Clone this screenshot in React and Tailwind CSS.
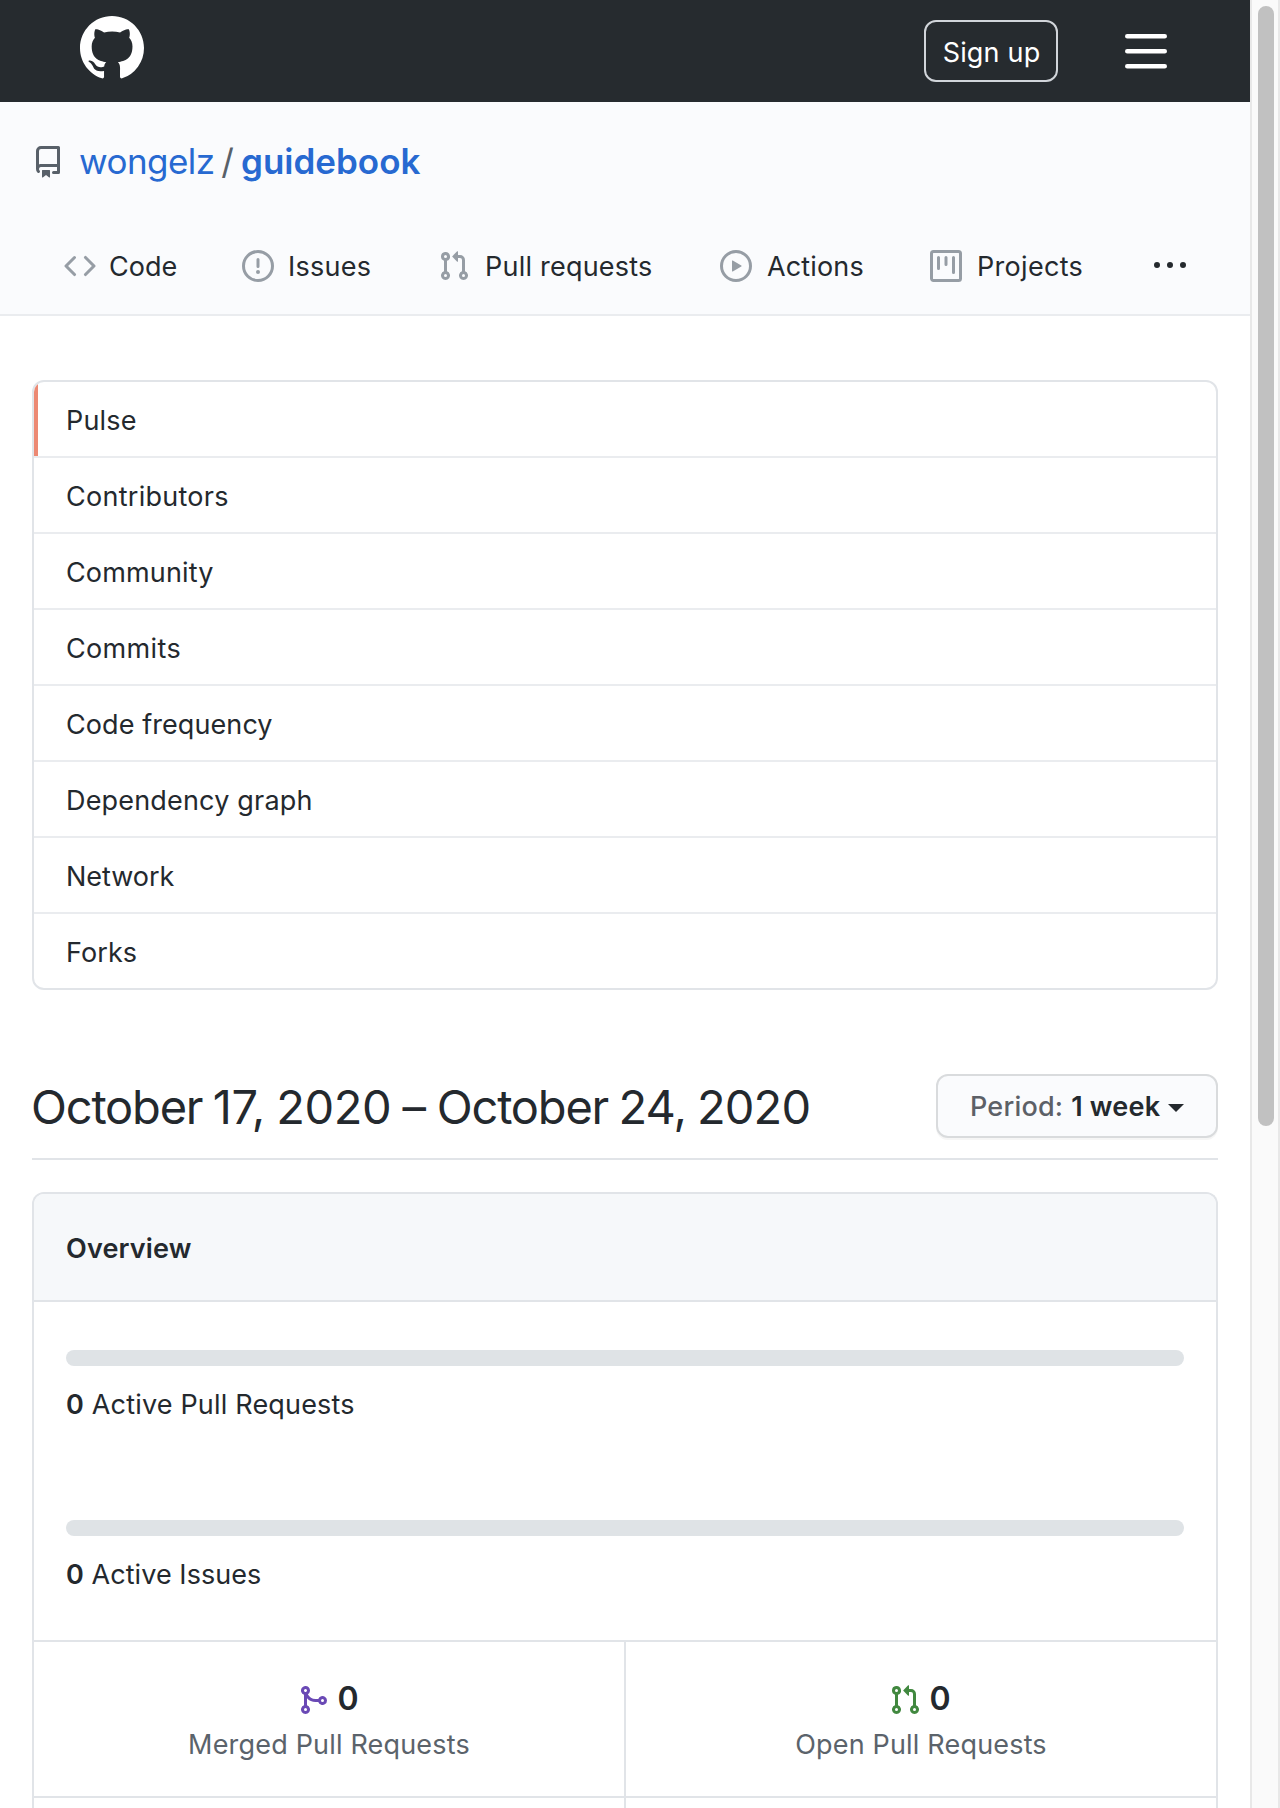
import React from 'react';

const paths = {
  github:
    'M8 0C3.58 0 0 3.58 0 8c0 3.54 2.29 6.53 5.47 7.59.4.07.55-.17.55-.38 0-.19-.01-.82-.01-1.49-2.01.37-2.53-.49-2.69-.94-.09-.23-.48-.94-.82-1.13-.28-.15-.68-.52-.01-.53.63-.01 1.08.58 1.23.82.72 1.21 1.87.87 2.33.66.07-.52.28-.87.51-1.07-1.78-.2-3.64-.89-3.64-3.95 0-.87.31-1.59.82-2.15-.08-.2-.36-1.02.08-2.12 0 0 .67-.21 2.2.82.64-.18 1.32-.27 2-.27.68 0 1.36.09 2 .27 1.53-1.04 2.2-.82 2.2-.82.44 1.1.16 1.92.08 2.12.51.56.82 1.27.82 2.15 0 3.07-1.87 3.75-3.65 3.95.29.25.54.73.54 1.48 0 1.07-.01 1.93-.01 2.2 0 .21.15.46.55.38A8.013 8.013 0 0016 8c0-4.42-3.58-8-8-8z',
  bars:
    'M1 2.75A.75.75 0 011.75 2h12.5a.75.75 0 110 1.5H1.75A.75.75 0 011 2.75zm0 5A.75.75 0 011.75 7h12.5a.75.75 0 110 1.5H1.75A.75.75 0 011 7.75zM1.75 12a.75.75 0 100 1.5h12.5a.75.75 0 100-1.5H1.75z',
  repo:
    'M2 2.5A2.5 2.5 0 014.5 0h8.75a.75.75 0 01.75.75v12.5a.75.75 0 01-.75.75h-2.5a.75.75 0 110-1.5h1.75v-2h-8a1 1 0 00-.714 1.7.75.75 0 01-1.072 1.05A2.495 2.495 0 012 11.5v-9zm10.5-1V9h-8c-.356 0-.694.074-1 .208V2.5a1 1 0 011-1h8zM5 12.25v3.25a.25.25 0 00.4.2l1.45-1.087a.25.25 0 01.3 0L8.6 15.7a.25.25 0 00.4-.2v-3.25a.25.25 0 00-.25-.25h-3.5a.25.25 0 00-.25.25z',
  code:
    'M4.72 3.22a.75.75 0 011.06 1.06L2.06 8l3.72 3.72a.75.75 0 11-1.06 1.06L.47 8.53a.75.75 0 010-1.06l4.25-4.25zm6.56 0a.75.75 0 10-1.06 1.06L13.94 8l-3.72 3.72a.75.75 0 101.06 1.06l4.25-4.25a.75.75 0 000-1.06l-4.25-4.25z',
  issue:
    'M8 1.5a6.5 6.5 0 100 13 6.5 6.5 0 000-13zM0 8a8 8 0 1116 0A8 8 0 010 8zm9 3a1 1 0 11-2 0 1 1 0 012 0zm-.25-6.25a.75.75 0 00-1.5 0v3.5a.75.75 0 001.5 0v-3.5z',
  pull:
    'M7.177 3.073L9.573.677A.25.25 0 0110 .854v4.792a.25.25 0 01-.427.177L7.177 3.427a.25.25 0 010-.354zM3.75 2.5a.75.75 0 100 1.5.75.75 0 000-1.5zm-2.25.75a2.25 2.25 0 113 2.122v5.256a2.251 2.251 0 11-1.5 0V5.372A2.25 2.25 0 011.5 3.25zM11 2.5h-1V4h1a1 1 0 011 1v5.628a2.251 2.251 0 101.5 0V5A2.5 2.5 0 0011 2.5zm1 10.25a.75.75 0 111.5 0 .75.75 0 01-1.5 0zM3.75 12a.75.75 0 100 1.5.75.75 0 000-1.5z',
  play:
    'M1.5 8a6.5 6.5 0 1113 0 6.5 6.5 0 01-13 0zM8 0a8 8 0 100 16A8 8 0 008 0zM6.379 5.227A.25.25 0 006 5.442v5.117a.25.25 0 00.379.214l4.264-2.559a.25.25 0 000-.428L6.379 5.227z',
  project:
    'M1.75 0A1.75 1.75 0 000 1.75v12.5C0 15.216.784 16 1.75 16h12.5A1.75 1.75 0 0016 14.25V1.75A1.75 1.75 0 0014.25 0H1.75zM1.5 1.75a.25.25 0 01.25-.25h12.5a.25.25 0 01.25.25v12.5a.25.25 0 01-.25.25H1.75a.25.25 0 01-.25-.25V1.75zM11.75 3a.75.75 0 00-.75.75v7.5a.75.75 0 001.5 0v-7.5a.75.75 0 00-.75-.75zm-8.25.75a.75.75 0 011.5 0v5.5a.75.75 0 01-1.5 0v-5.5zM8 3a.75.75 0 00-.75.75v3.5a.75.75 0 001.5 0v-3.5A.75.75 0 008 3z',
  kebab:
    'M8 9a1.5 1.5 0 100-3 1.5 1.5 0 000 3zM1.5 9a1.5 1.5 0 100-3 1.5 1.5 0 000 3zm13 0a1.5 1.5 0 100-3 1.5 1.5 0 000 3z',
  merge:
    'M5 3.254V3.25v.005a.75.75 0 110-.005v.004zm.45 1.9a2.25 2.25 0 10-1.95.218v5.256a2.25 2.25 0 101.5 0V7.123A5.735 5.735 0 009.25 9h1.378a2.251 2.251 0 100-1.5H9.25a4.25 4.25 0 01-3.8-2.346zM12.75 9a.75.75 0 100-1.5.75.75 0 000 1.5zm-8.5 4.5a.75.75 0 100-1.5.75.75 0 000 1.5z',
};

function Icon({ name, className = 'size-8' }) {
  return (
    <svg viewBox="0 0 16 16" fill="currentColor" fillRule="evenodd" className={`shrink-0 ${className}`}>
      <path d={paths[name]} />
    </svg>
  );
}

const tabs = [
  { icon: 'code', label: 'Code', box: 'w-[178px] gap-[13px]', text: 'tracking-[0px]' },
  { icon: 'issue', label: 'Issues', box: 'w-[196px] gap-[14px]', text: 'tracking-[0.25px]' },
  { icon: 'pull', label: 'Pull requests', box: 'w-[282px] gap-[15px]', text: 'tracking-[0.22px]' },
  { icon: 'play', label: 'Actions', box: 'w-[210px] gap-[15px]', text: 'tracking-[0.15px]' },
  { icon: 'project', label: 'Projects', box: 'w-[224px] gap-[15px]', text: 'tracking-[0.3px]' },
];

const menu = [
  { label: 'Pulse', text: 'tracking-[0.2px]', active: true },
  { label: 'Contributors', text: 'tracking-[0.27px]' },
  { label: 'Community', text: 'tracking-[0.15px]' },
  { label: 'Commits', text: 'tracking-[0.35px]' },
  { label: 'Code frequency', text: 'tracking-[0.08px]' },
  { label: 'Dependency graph', text: 'tracking-[0.18px]' },
  { label: 'Network', text: 'tracking-[-0.03px]' },
  { label: 'Forks', text: 'tracking-[0.1px]' },
];

function Stat({ icon, color, label }) {
  return (
    <div className="flex h-[154px] flex-col items-center pt-[39px]">
      <div className="flex h-9 items-center gap-2 pr-[2px]">
        <Icon name={icon} className={`mt-[2px] size-8 ${color}`} />
        <span className="text-[32px] leading-9 font-semibold">0</span>
      </div>
      <span className="mt-[10px] text-[#5b636b] tracking-[0.18px]">{label}</span>
    </div>
  );
}

function Activity({ label, text }) {
  return (
    <div className="h-[170px]">
      <div className="h-4 rounded-full bg-[#dfe3e6]" />
      <p className={`mt-[21px] ${text}`}>
        <span className="font-semibold">0</span> {label}
      </p>
    </div>
  );
}

export default function App() {
  return (
    <div className="flex h-[1808px] w-[1280px] overflow-hidden bg-white font-['Inter',sans-serif] text-[27px] leading-9 text-[#24292e]">
      <div className="w-[1250px]">
        <header className="flex h-[102px] bg-[#262b2f] pr-20 pl-20 text-white">
          <Icon name="github" className="mt-4 size-16" />
          <button className="mt-5 ml-auto flex h-[62px] w-[134px] items-center justify-center rounded-xl border-2 border-[#d1d5da] pt-1 pl-px tracking-[0.18px]">
            Sign up
          </button>
          <Icon name="bars" className="mt-7 ml-16 size-12" />
        </header>

        <section className="h-[214px] border-b-2 border-[#eaecef] bg-[#fafbfd] pt-[44px]">
          <div className="flex h-8 items-center pl-8 text-[35px] text-[#2769d1]">
            <span className="text-[#586069]">
              <Icon name="repo" />
            </span>
            <h1 className="-mt-[2px] ml-[15px] flex">
              <a className="w-[135px] tracking-[-0.55px]">wongelz</a>
              <span className="w-[27px] text-center text-[#586069]">/</span>
              <a className="font-semibold">guidebook</a>
            </h1>
          </div>
          <nav className="mt-[72px] flex h-8 items-center pl-16">
            {tabs.map((t) => (
              <a key={t.label} className={`flex shrink-0 items-center ${t.box}`}>
                <span className="text-[#969da5]">
                  <Icon name={t.icon} />
                </span>
                <span className={`pt-[2px] whitespace-nowrap ${t.text}`}>{t.label}</span>
              </a>
            ))}
            <Icon name="kebab" />
          </nav>
        </section>

        <main className="px-8 pt-16">
          <nav className="overflow-hidden rounded-xl border-2 border-[#e1e4e8]">
            {menu.map((m) => (
              <a
                key={m.label}
                className={`flex h-[76px] items-center border-b-2 border-[#eaecef] last:h-[74px] last:border-b-0 ${m.text}`}
              >
                <span className={m.active ? 'h-[74px] w-1 bg-[#ec8973]' : 'w-1'} />
                <span className="ml-7 pt-1">{m.label}</span>
              </a>
            ))}
          </nav>

          <div className="mt-[84px] flex h-[86px] items-start justify-between border-b-2 border-[#e1e4e8]">
            <h2 className="-ml-px pt-px text-[47px] leading-[64px] tracking-[-1.2px] whitespace-nowrap [word-spacing:-1.6px]">
              October <span className="tracking-[-0.4px]">17, 2020 – </span>
              October <span className="tracking-[-0.85px]">24, 2020</span>
            </h2>
            <button className="flex h-16 w-[282px] items-center rounded-xl border-2 border-[#d9dbdd] bg-[#fafbfd] pl-8 shadow-[0_2px_0_rgba(27,31,35,0.04)]">
              <span className="pt-[2px] font-medium tracking-[0.2px] text-[#5c6067]">Period:</span>
              <span className="ml-2 pt-[2px] font-semibold tracking-[0.22px]">1 week</span>
              <span className="mt-1 ml-2 border-x-8 border-t-8 border-x-transparent border-t-[#24292e]" />
            </button>
          </div>

          <section className="mt-8 overflow-hidden rounded-t-xl border-2 border-b-0 border-[#e1e4e8]">
            <h3 className="flex h-[108px] items-center border-b-2 border-[#e1e4e8] bg-[#f6f8fa] pt-1 pl-8 font-semibold tracking-[0.15px]">
              Overview
            </h3>
            <div className="h-[338px] px-8 pt-12">
              <Activity label="Active Pull Requests" text="tracking-[0.18px]" />
              <Activity label="Active Issues" text="tracking-[0.06px]" />
            </div>
            <div className="grid grid-cols-[590px_592px] border-t-2 border-[#e1e4e8]">
              <Stat icon="merge" color="text-[#6a49b5]" label="Merged Pull Requests" />
              <div className="border-l-2 border-[#e1e4e8]">
                <Stat icon="pull" color="text-[#41883f]" label="Open Pull Requests" />
              </div>
              <div className="h-5 border-t-2 border-[#e1e4e8]" />
              <div className="h-5 border-t-2 border-l-2 border-[#e1e4e8]" />
            </div>
          </section>
        </main>
      </div>

      <aside className="w-[30px] border-x-2 border-x-[#e8e8e8] bg-[#fafafa] pt-[6px] pl-[6px]">
        <div className="h-[1120px] w-4 rounded-full bg-[#c1c1c1]" />
      </aside>
    </div>
  );
}
